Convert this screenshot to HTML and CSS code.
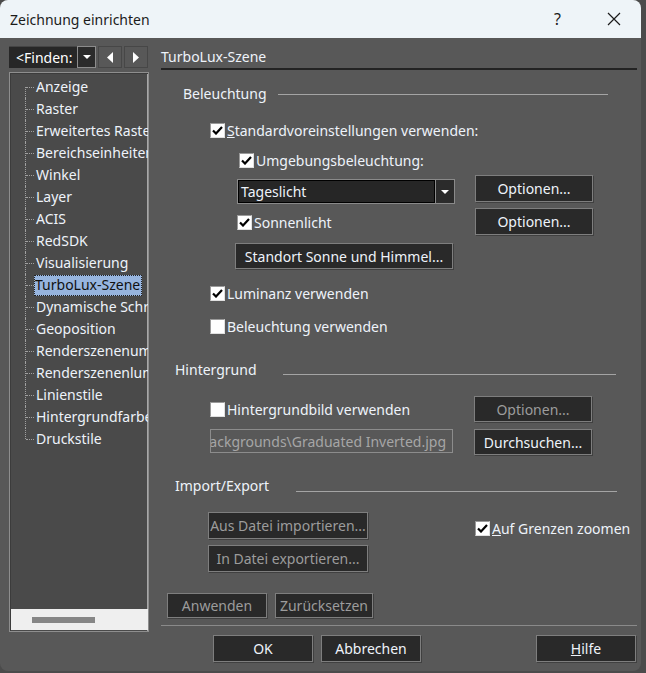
FILE: index.html
```html
<!DOCTYPE html>
<html lang="de">
<head>
  <meta charset="UTF-8">
  <meta name="viewport" content="width=device-width, initial-scale=1.0">
  <title>Zeichnung einrichten</title>
  <link rel="stylesheet" href="styles.css">
</head>
<body>
  <div class="window">
    <div class="titlebar">
      <span class="title">Zeichnung einrichten</span>
      <span class="help">?</span>
      <span class="close">
        <svg width="14" height="14" viewBox="0 0 14 14"><path d="M1 1 L13 13 M13 1 L1 13" stroke="#1b1b1b" stroke-width="1.2" fill="none"/></svg>
      </span>
    </div>

    <div class="dialog">
      <div class="sidebar">
        <div class="finder">
          <div class="find-box">&lt;Finden:</div>
          <div class="find-drop">
            <svg width="8" height="4" viewBox="0 0 8 4"><path d="M0 0 H8 L4 4 Z" fill="#fff"/></svg>
          </div>
          <div class="nav-btn">
            <svg width="6" height="11" viewBox="0 0 6 11"><path d="M6 0 V11 L0 5.5 Z" fill="#fff"/></svg>
          </div>
          <div class="nav-btn">
            <svg width="6" height="11" viewBox="0 0 6 11"><path d="M0 0 V11 L6 5.5 Z" fill="#fff"/></svg>
          </div>
        </div>
        <div class="tree">
          <ul class="tree-list">
            <li><span>Anzeige</span></li>
            <li><span>Raster</span></li>
            <li><span>Erweitertes Raster</span></li>
            <li><span>Bereichseinheiten</span></li>
            <li><span>Winkel</span></li>
            <li><span>Layer</span></li>
            <li><span>ACIS</span></li>
            <li><span>RedSDK</span></li>
            <li><span>Visualisierung</span></li>
            <li><span class="selected">TurboLux-Szene</span></li>
            <li><span>Dynamische Schraffur</span></li>
            <li><span>Geoposition</span></li>
            <li><span>Renderszenenumgebung</span></li>
            <li><span>Renderszenenluminanz</span></li>
            <li><span>Linienstile</span></li>
            <li><span>Hintergrundfarbe</span></li>
            <li><span>Druckstile</span></li>
          </ul>
          <div class="hscroll"><div class="thumb"></div></div>
        </div>
      </div>

      <div class="main">
        <div class="page-title">TurboLux-Szene</div>

        <div class="group-head head-light">
          <span>Beleuchtung</span><span class="rule"></span>
        </div>
        <div class="row row-std">
          <label class="check"><span class="box on"><svg width="11" height="9" viewBox="0 0 11 9"><path d="M1 4.5 L4 7.5 L10 1" stroke="#000" stroke-width="2.2" fill="none"/></svg></span><u>S</u>tandardvoreinstellungen verwenden:</label>
        </div>
        <div class="row row-amb">
          <label class="check"><span class="box on"><svg width="11" height="9" viewBox="0 0 11 9"><path d="M1 4.5 L4 7.5 L10 1" stroke="#000" stroke-width="2.2" fill="none"/></svg></span>Umgebungsbeleuchtung:</label>
        </div>
        <div class="row row-combo">
          <div class="combo">
            <div class="combo-text">Tageslicht</div>
            <div class="combo-drop">
              <svg width="8" height="4" viewBox="0 0 8 4"><path d="M0 0 H8 L4 4 Z" fill="#fff"/></svg>
            </div>
          </div>
          <button class="btn btn-opt btn-tall">Optionen...</button>
        </div>
        <div class="row row-sun">
          <label class="check check-wide"><span class="box on"><svg width="11" height="9" viewBox="0 0 11 9"><path d="M1 4.5 L4 7.5 L10 1" stroke="#000" stroke-width="2.2" fill="none"/></svg></span>Sonnenlicht</label>
          <button class="btn btn-opt btn-tall">Optionen...</button>
        </div>
        <div class="row row-standort">
          <button class="btn btn-standort">Standort Sonne und Himmel...</button>
        </div>
        <div class="row row-lum">
          <label class="check"><span class="box on"><svg width="11" height="9" viewBox="0 0 11 9"><path d="M1 4.5 L4 7.5 L10 1" stroke="#000" stroke-width="2.2" fill="none"/></svg></span>Luminanz verwenden</label>
        </div>
        <div class="row row-bel">
          <label class="check"><span class="box"></span>Beleuchtung verwenden</label>
        </div>

        <div class="group-head head-bg">
          <span>Hintergrund</span><span class="rule"></span>
        </div>
        <div class="row row-bgimg">
          <label class="check check-bg"><span class="box"></span>Hintergrundbild verwenden</label>
          <button class="btn btn-opt disabled">Optionen...</button>
        </div>
        <div class="row row-path">
          <div class="path-field"><span>Backgrounds\Graduated Inverted.jpg</span></div>
          <button class="btn btn-opt">Durchsuchen...</button>
        </div>

        <div class="group-head head-io">
          <span>Import/Export</span><span class="rule"></span>
        </div>
        <div class="row row-imp">
          <button class="btn btn-file disabled">Aus Datei importieren...</button>
          <label class="check check-zoom"><span class="box on"><svg width="11" height="9" viewBox="0 0 11 9"><path d="M1 4.5 L4 7.5 L10 1" stroke="#000" stroke-width="2.2" fill="none"/></svg></span><u>A</u>uf Grenzen zoomen</label>
        </div>
        <div class="row row-exp">
          <button class="btn btn-file disabled">In Datei exportieren...</button>
        </div>

        <div class="row row-apply">
          <button class="btn btn-apply disabled">Anwenden</button>
          <button class="btn btn-reset disabled">Zurücksetzen</button>
        </div>
        <div class="separator"></div>
        <div class="row footer">
          <button class="btn btn-foot">OK</button>
          <button class="btn btn-foot btn-cancel">Abbrechen</button>
          <button class="btn btn-foot btn-help"><u>H</u>ilfe</button>
        </div>
      </div>
    </div>
  </div>
</body>
</html>
```

FILE: styles.css
```css
body {
  margin: 0;
  background: #4b4b4b;
  font-family: "Noto Sans", "Open Sans", sans-serif;
  font-size: 14px;
  color: #eef3fa;
}
.window {
  width: 641px;
  height: 671px;
  background: #585858;
  border-radius: 8px;
  overflow: hidden;
  display: flex;
  flex-direction: column;
}
.titlebar {
  height: 38px;
  flex: 0 0 38px;
  background: #eef4f8;
  color: #1b1b1b;
  display: flex;
  align-items: center;
  padding-left: 10px;
  font-size: 14px;
}
.title {
  flex: 1;
}
.help {
  font-size: 16px;
  margin-right: 46px;
}
.close {
  display: flex;
  margin-right: 20px;
}

.dialog {
  flex: 1;
  display: flex;
}

/* left side */
.sidebar {
  width: 152px;
  padding: 8px 0 0 9px;
  display: flex;
  flex-direction: column;
}
.finder {
  display: flex;
  height: 22px;
}
.find-box {
  width: 68px;
  background: #272727;
  border-top: 1px solid #444;
  padding-left: 7px;
  box-sizing: border-box;
  line-height: 21px;
  white-space: nowrap;
  overflow: hidden;
  color: #fff;
}
.find-drop {
  width: 19px;
  box-sizing: border-box;
  border: 1px solid #8c8c8c;
  background: #2b2b2b;
  display: flex;
  align-items: center;
  justify-content: center;
}
.nav-btn {
  width: 24px;
  box-sizing: border-box;
  border: 1px solid #474747;
  margin-left: 2px;
  display: flex;
  align-items: center;
  justify-content: center;
}
.nav-btn:first-of-type {
  margin-left: 3px;
}
.tree {
  margin-top: 4px;
  width: 140px;
  height: 560px;
  box-sizing: border-box;
  border: 1px solid #8e8e8e;
  box-shadow: inset 1px 1px 0 #3c3c3c, inset -1px 0 0 #a8a8a8;
  background: #4a4a4a;
  display: flex;
  flex-direction: column;
  overflow: hidden;
}
.tree-list {
  flex: 1;
  list-style: none;
  margin: 0;
  padding: 3px 0 0 0;
  overflow: hidden;
}
.tree-list li {
  position: relative;
  height: 22px;
  line-height: 22px;
  padding-left: 26px;
  white-space: nowrap;
}
.tree-list li::before {
  content: '';
  position: absolute;
  left: 15px;
  top: 0;
  bottom: 0;
  border-left: 1px dotted #a0a0a0;
}
.tree-list li:first-child::before {
  top: 11px;
}
.tree-list li:last-child::before {
  bottom: 11px;
}
.tree-list li::after {
  content: '';
  position: absolute;
  left: 16px;
  top: 11px;
  width: 8px;
  border-top: 1px dotted #a0a0a0;
}
.tree-list .selected {
  display: inline-block;
  height: 21px;
  line-height: 20px;
  margin-left: -2px;
  padding: 0 2px 0 1px;
  background: #97b5df;
  color: #111;
  outline: 1px dotted #222;
  outline-offset: -1px;
}
.hscroll {
  height: 21px;
  margin: 0 0 1px 1px;
  background: #efefef;
  display: flex;
  align-items: center;
}
.thumb {
  width: 63px;
  height: 6px;
  margin-left: 21px;
  background: #868686;
}

/* right side */
.main {
  flex: 1;
  padding: 8px 4px 0 0;
  display: flex;
  flex-direction: column;
}
.page-title {
  height: 22px;
  line-height: 22px;
  border-bottom: 2px solid #232323;
}
.group-head {
  display: flex;
  height: 20px;
  line-height: 20px;
  align-items: center;
}
.rule {
  flex: 1;
  border-top: 1px solid #a4a4a4;
}
.head-light {
  margin-top: 14px;
  padding-left: 22px;
}
.head-light .rule {
  margin: 0 29px 0 11px;
}
.head-bg {
  margin-top: 23px;
  padding-left: 14px;
}
.head-bg .rule {
  align-self: flex-end;
  margin: 0 21px 5px 26px;
}
.head-io {
  margin-top: 21px;
  padding-left: 14px;
}
.head-io .rule {
  align-self: flex-end;
  margin: 0 20px 4px 27px;
}

.row {
  display: flex;
  align-items: flex-start;
}
.check {
  display: flex;
  align-items: center;
  height: 22px;
  white-space: nowrap;
}
.box {
  width: 15px;
  height: 15px;
  box-sizing: border-box;
  background: #fff;
  border: 1px solid #9a9a9a;
  border-right-color: #e0e0e0;
  border-bottom-color: #e0e0e0;
  margin-right: 2px;
  display: flex;
  align-items: center;
  justify-content: center;
}
.row-std {
  margin-top: 15px;
  padding-left: 49px;
}
.row-amb {
  margin-top: 8px;
  padding-left: 78px;
}
.row-combo {
  margin-top: 4px;
  padding-left: 76px;
}
.combo {
  display: flex;
  width: 218px;
  height: 25px;
  margin-top: 4px;
  margin-right: 20px;
}
.combo-text {
  flex: 1;
  background: #262626;
  border: 1px solid #8a8a8a;
  box-shadow: inset 0 0 0 1px #000;
  padding-left: 3px;
  line-height: 23px;
}
.combo-drop {
  width: 18px;
  border: 1px solid #8a8a8a;
  border-left: none;
  background: #2b2b2b;
  display: flex;
  align-items: center;
  justify-content: center;
}
.row-sun {
  margin-top: 4px;
  padding-left: 76px;
}
.check-wide {
  flex: 0 0 238px;
  margin-top: 3px;
}
.row-standort {
  margin-top: 8px;
  padding-left: 74px;
}
.row-lum {
  margin-top: 13px;
  padding-left: 49px;
}
.row-bel {
  margin-top: 11px;
  padding-left: 49px;
}
.row-bgimg {
  margin-top: 16px;
  padding-left: 49px;
}
.check-bg {
  flex: 0 0 264px;
  margin-top: 2px;
}
.row-path {
  margin-top: 7px;
  padding-left: 49px;
}
.path-field {
  width: 243px;
  height: 24px;
  box-sizing: border-box;
  border: 1px solid #8c8c8c;
  margin-right: 21px;
  padding-right: 6px;
  display: flex;
  justify-content: flex-end;
  align-items: center;
  overflow: hidden;
  white-space: nowrap;
  color: #a6a6a6;
}
.row-imp {
  margin-top: 16px;
  padding-left: 47px;
}
.check-zoom {
  margin: 5px 0 0 107px;
}
.row-exp {
  margin-top: 6px;
  padding-left: 47px;
}
.row-apply {
  margin-top: 21px;
  padding-left: 6px;
}
.separator {
  margin-top: 7px;
  border-top: 1px solid #8a8a8a;
}
.footer {
  margin-top: 9px;
  padding: 0 1px 0 52px;
}

/* buttons */
.btn {
  height: 26px;
  box-sizing: border-box;
  padding: 0;
  background: #292929;
  border: 1px solid #7e7e7e;
  box-shadow: 1px 1px 0 #404040;
  color: #eef3fa;
  font: inherit;
  display: flex;
  align-items: center;
  justify-content: center;
}
.btn.disabled {
  color: #9c9c9c;
}
.btn-opt {
  width: 118px;
}
.btn-tall {
  height: 27px;
}
.btn-standort {
  width: 218px;
}
.btn-file {
  width: 160px;
  height: 27px;
}
.btn-apply {
  width: 100px;
  height: 25px;
}
.btn-reset {
  width: 98px;
  height: 25px;
  margin-left: 8px;
}
.btn-foot {
  width: 100px;
  height: 27px;
}
.btn-cancel {
  margin-left: 8px;
}
.btn-help {
  margin-left: auto;
}
```
